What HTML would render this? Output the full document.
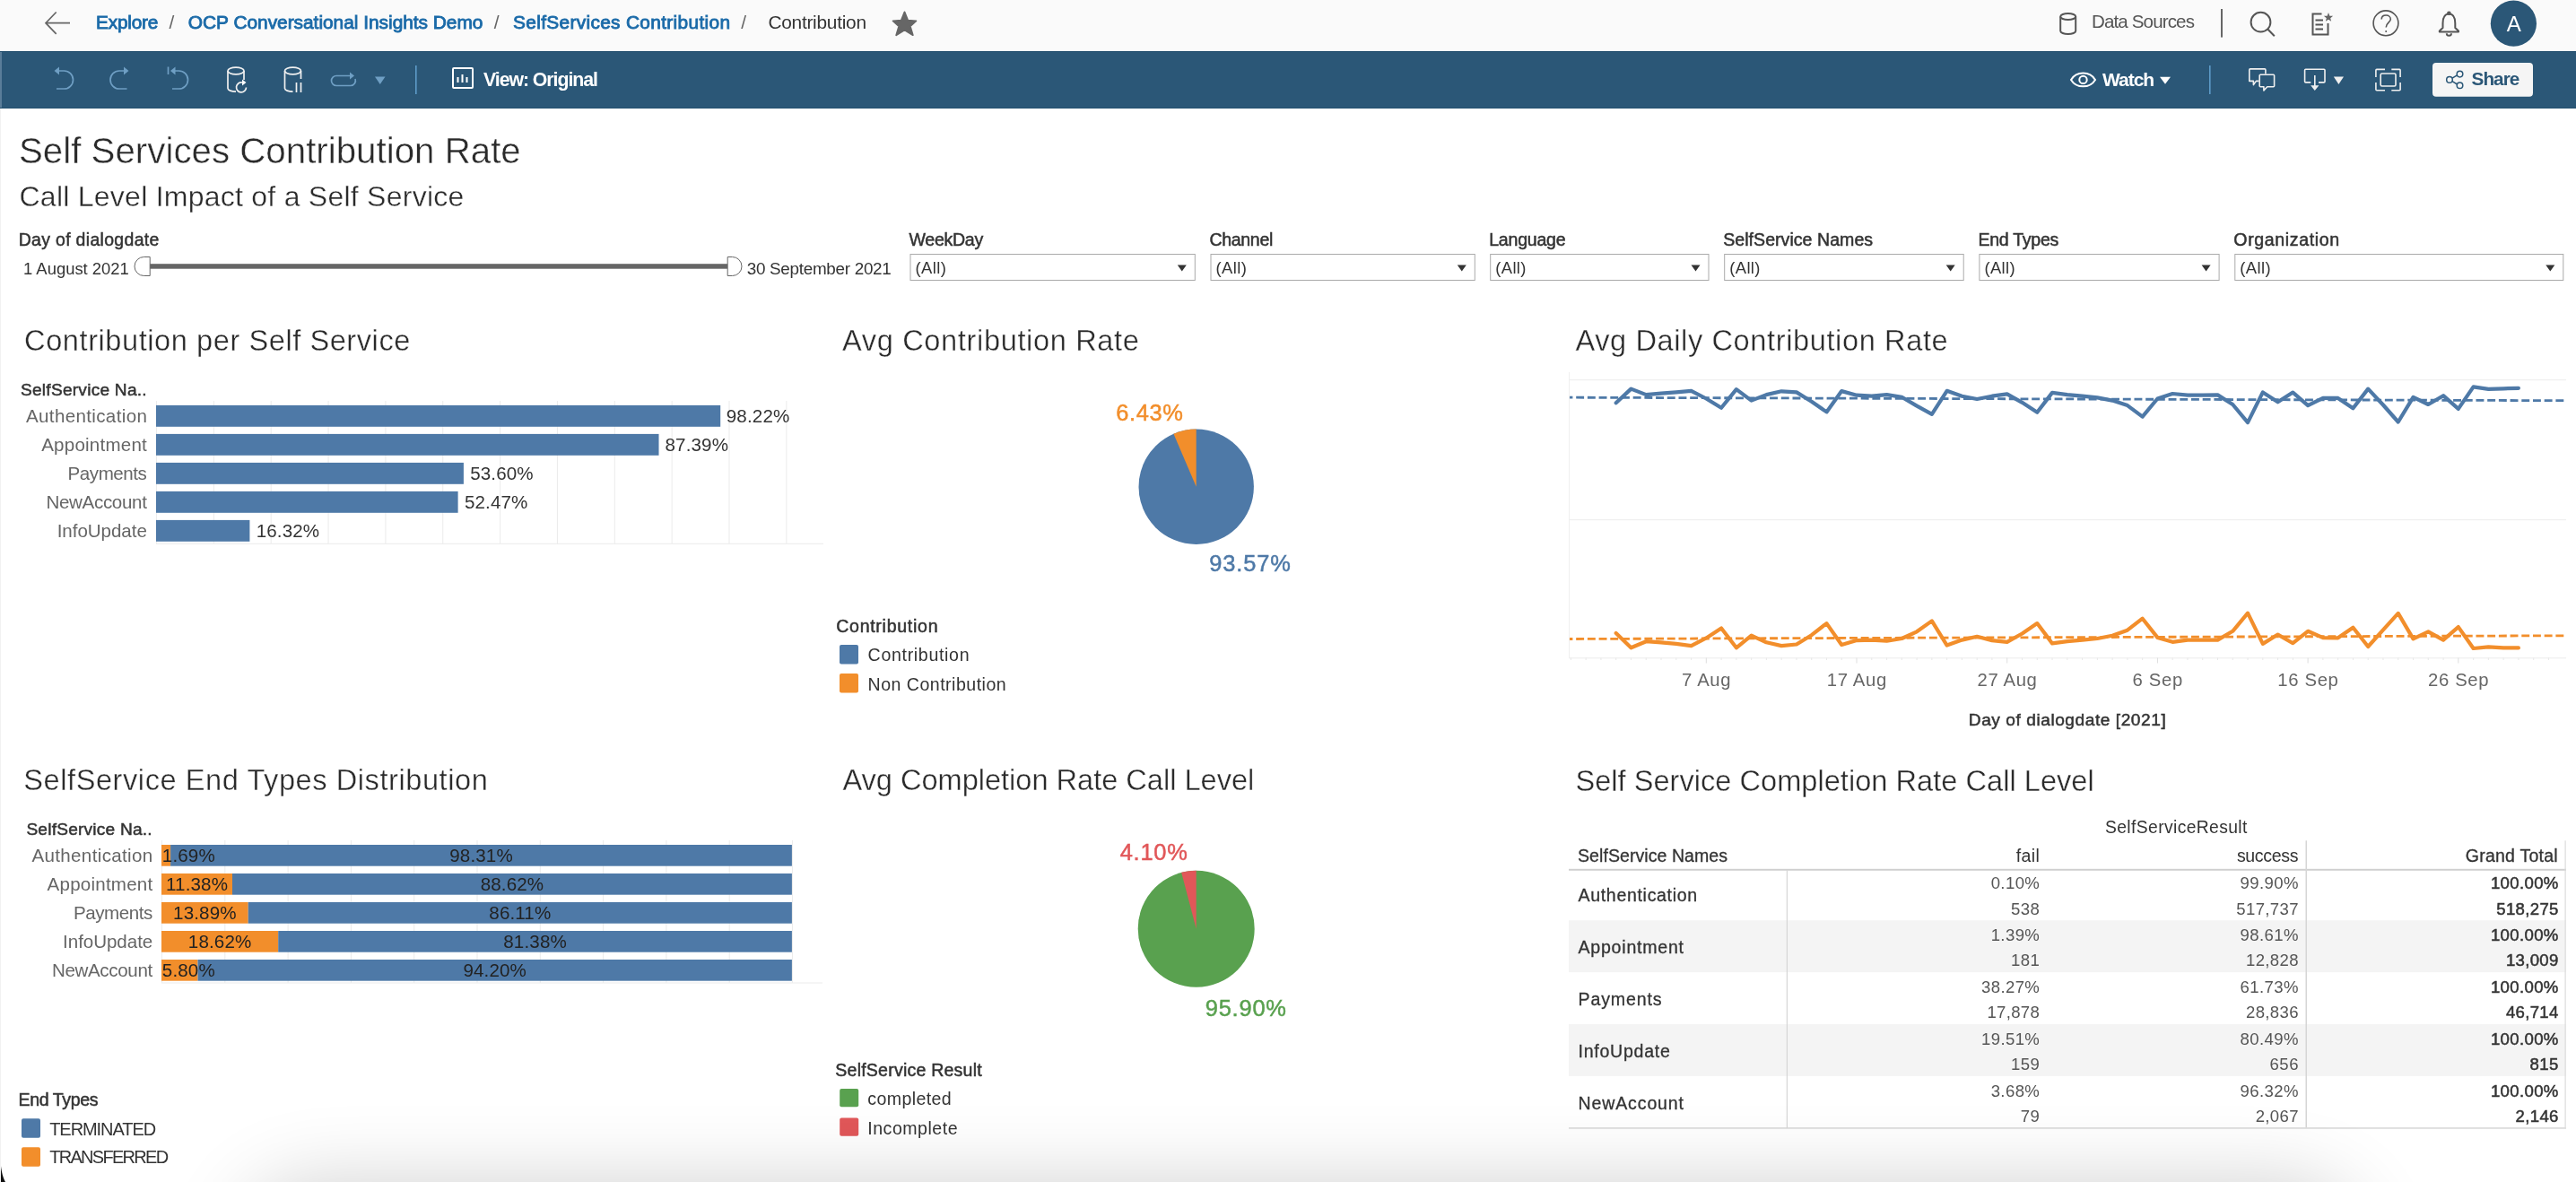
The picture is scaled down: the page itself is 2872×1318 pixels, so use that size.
<!DOCTYPE html><html><head><meta charset="utf-8"><style>
html,body{margin:0;padding:0;}
body{width:2872px;height:1318px;overflow:hidden;position:relative;background:#fff;font-family:"Liberation Sans",sans-serif;}
.t{position:absolute;white-space:nowrap;line-height:1;}
.a{position:absolute;}
svg{position:absolute;overflow:visible;}
</style></head><body><div style="position:absolute;left:0;top:0;width:2872px;height:1318px;overflow:hidden;will-change:transform;">
<div class="a" style="left:0;top:0;width:2872px;height:57px;background:#fafafa;"></div>
<svg style="left:0;top:0" width="2872" height="57"><g fill="none" stroke="#666" stroke-width="1.7"><path d="M78 25.7H51M62.7 13.5L51 25.7L62.7 37.8"/></g></svg>
<div class="t" style="left:107.10px;top:15.04px;font-size:20.86px;letter-spacing:-0.238px;font-weight:400;color:#1a6aa8;-webkit-text-stroke:0.85px #1a6aa8;">Explore</div>
<div class="t" style="left:188.40px;top:15.04px;font-size:20.86px;letter-spacing:0.000px;font-weight:400;color:#666;">/</div>
<div class="t" style="left:209.80px;top:15.04px;font-size:20.86px;letter-spacing:-0.008px;font-weight:400;color:#1a6aa8;-webkit-text-stroke:0.85px #1a6aa8;">OCP Conversational Insights Demo</div>
<div class="t" style="left:550.70px;top:15.04px;font-size:20.86px;letter-spacing:0.000px;font-weight:400;color:#666;">/</div>
<div class="t" style="left:572.00px;top:15.04px;font-size:20.86px;letter-spacing:0.326px;font-weight:400;color:#1a6aa8;-webkit-text-stroke:0.85px #1a6aa8;">SelfServices Contribution</div>
<div class="t" style="left:826.30px;top:15.04px;font-size:20.86px;letter-spacing:0.000px;font-weight:400;color:#666;">/</div>
<div class="t" style="left:856.40px;top:15.04px;font-size:20.86px;letter-spacing:-0.260px;font-weight:400;color:#333;">Contribution</div>
<svg style="left:0;top:0" width="1100" height="57"><polygon points="1008.5,13.4 1012.2,22.6 1021.4,23.3 1014.8,29.3 1017.8,39.2 1008.5,33.4 999.2,39.2 1002.2,29.3 995.6,23.3 1004.8,22.6" fill="#666" stroke="#666" stroke-width="1.8" stroke-linejoin="round"/></svg>
<svg style="left:0;top:0" width="2872" height="57"><g fill="none" stroke="#555" stroke-width="2"><ellipse cx="2305.7" cy="18.5" rx="8.5" ry="3.6"/><path d="M2297.2 18.5V34.5A8.5 3.6 0 0 0 2314.2 34.5V18.5"/></g><rect x="2476" y="10" width="2" height="31.6" fill="#666"/><g fill="none" stroke="#555" stroke-width="2"><circle cx="2520.5" cy="24.7" r="10.9"/><path d="M2528.3 32.5L2535.8 40.3"/><path d="M2588.5 15.5H2578.5V38.5H2595.5V26"/><path d="M2581.5 22.5H2590M2581.5 27.5H2590M2581.5 32.5H2590"/></g><polygon points="2596.00,14.10 2597.35,17.64 2601.14,17.83 2598.19,20.21 2599.17,23.87 2596.00,21.80 2592.83,23.87 2593.81,20.21 2590.86,17.83 2594.65,17.64" fill="#666"/><g fill="none" stroke="#555" stroke-width="1.6"><circle cx="2660" cy="25.8" r="13.9"/><path d="M2655.2 21.5C2655.2 18.2 2657.5 17 2660.2 17C2663 17 2665.3 18.8 2665.3 21.5C2665.3 24.6 2660.2 25.5 2660.2 30.5"/></g><circle cx="2660.2" cy="35" r="1" fill="#555"/><g fill="none" stroke="#555" stroke-width="2" stroke-linejoin="round"><path d="M2730.4 15.5C2725.5 15.5 2723.5 20 2723.5 26V31L2719.8 34.5V35.5H2741V34.5L2737.3 31V26C2737.3 20 2735.3 15.5 2730.4 15.5Z"/><path d="M2727.8 37.2A2.6 2.6 0 0 0 2733 37.2"/><circle cx="2730.4" cy="14.8" r="1.3"/></g><circle cx="2802.4" cy="26.2" r="25.6" fill="#2b5777"/></svg>
<div class="t" style="left:2332.00px;top:14.39px;font-size:20.57px;letter-spacing:-0.877px;font-weight:400;color:#555;">Data Sources</div>
<div class="t" style="left:2794.65px;top:15.26px;font-size:24.14px;letter-spacing:0.000px;font-weight:400;color:#fff;">A</div>
<div class="a" style="left:0;top:57px;width:2872px;height:64px;background:#2b5777;"></div>
<div class="a" style="left:0;top:57px;width:2px;height:64px;background:#5a7d99;"></div>
<div class="a" style="left:0;top:57px;width:2872px;height:1px;background:#24506f;"></div>
<div class="a" style="left:0;top:120px;width:2872px;height:1px;background:#24506f;"></div>
<svg style="left:0;top:57px" width="2872" height="64"><g fill="none" stroke-width="1.7" stroke-linecap="butt"><g stroke="#6f9fc4"><path d="M63.5 22H71.5A10 10 0 0 1 71.5 42H63"/></g><polygon points="60.5,22 66,17.5 66,26.5" fill="#6f9fc4"/><g stroke="#6f9fc4"><path d="M141 22H133A10 10 0 0 0 133 42H141.5"/></g><polygon points="143.5,22 138,17.5 138,26.5" fill="#6f9fc4"/><g stroke="#6f9fc4"><path d="M193.5 22H199.5A10 10 0 0 1 199.5 42H192"/><path d="M187.5 17.5V26"/></g><polygon points="190,22 195.5,17.5 195.5,26.5" fill="#6f9fc4"/><g stroke="#f0f0f0"><ellipse cx="263" cy="22" rx="9" ry="3.8"/><path d="M254 22V41.5A9 3.8 0 0 0 263 45.2"/><path d="M272 22V32"/><path d="M274.5 40.5A5.5 5.5 0 1 1 270 35"/></g><polygon points="270,31.5 274.5,35 270,38.5" fill="#fff"/><g stroke="#f0f0f0"><ellipse cx="326.5" cy="22" rx="9" ry="3.8"/><path d="M317.5 22V41.5A9 3.8 0 0 0 326.5 45.2"/><path d="M335.5 22V31"/><path d="M330.5 35V46M335.5 35V46"/></g><g stroke="#6f9fc4"><path d="M392 27.5H375A5.5 5.5 0 0 0 375 38.5H391A5.5 5.5 0 0 0 396 31"/></g><polygon points="390,23.5 395,27.5 390,31.5" fill="#6f9fc4"/><polygon points="418,28.5 429.5,28.5 423.75,37" fill="#6f9fc4" stroke="none"/></g><rect x="463" y="16" width="1.6" height="32" fill="#5d9bc8"/><g fill="none" stroke="#fff" stroke-width="2"><rect x="505" y="19" width="22" height="22" rx="1"/><path d="M510.5 35V29M515.5 35V26M520.5 35V29"/></g></svg>
<div class="t" style="left:539.00px;top:78.68px;font-size:21.29px;letter-spacing:-1.042px;font-weight:700;color:#fff;">View: Original</div>
<svg style="left:0;top:57px" width="2872" height="64"><g fill="none" stroke="#fff" stroke-width="2"><path d="M2309 31.9C2315 22 2330 22 2336 31.9C2330 41.8 2315 41.8 2309 31.9Z"/><circle cx="2322.5" cy="31.9" r="4.2"/></g><polygon points="2408,28.7 2420,28.7 2414,36.8" fill="#fff"/><rect x="2463" y="16" width="1.6" height="32" fill="#5d9bc8"/><g fill="none" stroke="#f0f0f0" stroke-width="1.6" stroke-linejoin="round"><path d="M2518.5 33.4H2515.4L2512.4 37.6V33.4H2507.8V20.9Q2507.8 19.9 2508.8 19.9H2524.9Q2525.9 19.9 2525.9 20.9V25.5"/><path d="M2520.2 26.2H2534.6Q2535.6 26.2 2535.6 27.2V38.7Q2535.6 39.7 2534.6 39.7H2527.8L2523.9 43.9V39.7H2520.2Q2519.2 39.7 2519.2 38.7V27.2Q2519.2 26.2 2520.2 26.2Z"/><path d="M2576.3 34.9H2570.6Q2569.6 34.9 2569.6 33.9V21.2Q2569.6 20.2 2570.6 20.2H2591Q2592 20.2 2592 21.2V33.9Q2592 34.9 2591 34.9H2585"/><path d="M2580.8 27V39"/></g><polygon points="2576.2,38.2 2585.4,38.2 2580.8,44" fill="#f0f0f0"/><polygon points="2601.8,28.4 2613,28.4 2607.4,36.9" fill="#f0f0f0"/><g fill="none" stroke="#f0f0f0" stroke-width="1.6"><path d="M2648.9 29V21.4Q2648.9 20.4 2649.9 20.4H2659M2666.3 20.4H2675.1Q2676.1 20.4 2676.1 21.4V29M2676.1 35V42.7Q2676.1 43.7 2675.1 43.7H2666.3M2659 43.7H2649.9Q2648.9 43.7 2648.9 42.7V35"/><rect x="2654.2" y="25" width="16.8" height="14" rx="1.5"/></g><rect x="2712" y="12.9" width="112" height="37.9" rx="4" fill="#f5f5f5"/><g fill="none" stroke="#2b5777" stroke-width="1.5"><circle cx="2731" cy="31.9" r="3.3"/><circle cx="2742.5" cy="25.6" r="3.3"/><circle cx="2742.5" cy="38.2" r="3.3"/><path d="M2734 30.2L2739.5 26.8M2734 33.6L2739.5 37"/></g></svg>
<div class="t" style="left:2344.00px;top:78.22px;font-size:21.00px;letter-spacing:-1.006px;font-weight:700;color:#fff;">Watch</div>
<div class="t" style="left:2755.60px;top:78.17px;font-size:20.71px;letter-spacing:-0.966px;font-weight:700;color:#2b5777;">Share</div>
<div class="t" style="left:21.00px;top:148.90px;font-size:40.29px;letter-spacing:-0.000px;font-weight:400;color:#2a2a2a;-webkit-text-stroke:0.44px #fff;">Self Services Contribution Rate</div>
<div class="t" style="left:21.50px;top:202.81px;font-size:32.00px;letter-spacing:0.249px;font-weight:400;color:#2a2a2a;-webkit-text-stroke:0.35px #fff;">Call Level Impact of a Self Service</div>
<div class="t" style="left:20.70px;top:257.95px;font-size:19.43px;letter-spacing:0.343px;font-weight:400;color:#333;-webkit-text-stroke:0.5px #333;">Day of dialogdate</div>
<div class="t" style="left:26.00px;top:291.10px;font-size:18.43px;letter-spacing:0.004px;font-weight:400;color:#333;">1 August 2021</div>
<div class="t" style="left:832.70px;top:290.84px;font-size:18.86px;letter-spacing:-0.284px;font-weight:400;color:#333;">30 September 2021</div>
<svg style="left:0;top:0" width="1000" height="330"><rect x="167" y="294.2" width="644" height="5.5" fill="#666"/><path d="M167.2 286.5V307.5H160.5A10.5 10.5 0 0 1 160.5 286.5Z" fill="#fff" stroke="#666" stroke-width="1"/><path d="M811.2 286.5V307.5H816.5A10.5 10.5 0 0 0 816.5 286.5Z" fill="#fff" stroke="#666" stroke-width="1"/></svg>
<svg style="left:0;top:0" width="2872" height="330">
<rect x="1015.0" y="283.5" width="317.3" height="29" fill="#fff" stroke="#aaa" stroke-width="1"/>
<polygon points="1312.8,295.4 1322.8,295.4 1317.8,302.4" fill="#333"/>
<rect x="1350.0" y="283.5" width="294.3" height="29" fill="#fff" stroke="#aaa" stroke-width="1"/>
<polygon points="1624.8,295.4 1634.8,295.4 1629.8,302.4" fill="#333"/>
<rect x="1661.7" y="283.5" width="243.3" height="29" fill="#fff" stroke="#aaa" stroke-width="1"/>
<polygon points="1885.5,295.4 1895.5,295.4 1890.5,302.4" fill="#333"/>
<rect x="1922.7" y="283.5" width="266.5" height="29" fill="#fff" stroke="#aaa" stroke-width="1"/>
<polygon points="2169.7,295.4 2179.7,295.4 2174.7,302.4" fill="#333"/>
<rect x="2206.9" y="283.5" width="267.2" height="29" fill="#fff" stroke="#aaa" stroke-width="1"/>
<polygon points="2454.6,295.4 2464.6,295.4 2459.6,302.4" fill="#333"/>
<rect x="2491.8" y="283.5" width="366.0" height="29" fill="#fff" stroke="#aaa" stroke-width="1"/>
<polygon points="2838.3,295.4 2848.3,295.4 2843.3,302.4" fill="#333"/>
</svg>
<div class="t" style="left:1013.50px;top:258.23px;font-size:19.57px;letter-spacing:-0.295px;font-weight:400;color:#333;-webkit-text-stroke:0.5px #333;">WeekDay</div>
<div class="t" style="left:1020.50px;top:289.90px;font-size:18.43px;letter-spacing:0.388px;font-weight:400;color:#333;">(All)</div>
<div class="t" style="left:1348.50px;top:258.23px;font-size:19.57px;letter-spacing:-0.351px;font-weight:400;color:#333;-webkit-text-stroke:0.5px #333;">Channel</div>
<div class="t" style="left:1355.50px;top:289.90px;font-size:18.43px;letter-spacing:0.388px;font-weight:400;color:#333;">(All)</div>
<div class="t" style="left:1660.20px;top:258.23px;font-size:19.57px;letter-spacing:-0.225px;font-weight:400;color:#333;-webkit-text-stroke:0.5px #333;">Language</div>
<div class="t" style="left:1667.20px;top:289.90px;font-size:18.43px;letter-spacing:0.388px;font-weight:400;color:#333;">(All)</div>
<div class="t" style="left:1921.20px;top:258.23px;font-size:19.57px;letter-spacing:0.037px;font-weight:400;color:#333;-webkit-text-stroke:0.5px #333;">SelfService Names</div>
<div class="t" style="left:1928.20px;top:289.90px;font-size:18.43px;letter-spacing:0.388px;font-weight:400;color:#333;">(All)</div>
<div class="t" style="left:2205.40px;top:258.23px;font-size:19.57px;letter-spacing:-0.265px;font-weight:400;color:#333;-webkit-text-stroke:0.5px #333;">End Types</div>
<div class="t" style="left:2212.40px;top:289.90px;font-size:18.43px;letter-spacing:0.388px;font-weight:400;color:#333;">(All)</div>
<div class="t" style="left:2490.30px;top:258.23px;font-size:19.57px;letter-spacing:0.621px;font-weight:400;color:#333;-webkit-text-stroke:0.5px #333;">Organization</div>
<div class="t" style="left:2497.30px;top:289.90px;font-size:18.43px;letter-spacing:0.388px;font-weight:400;color:#333;">(All)</div>
<div class="t" style="left:27.10px;top:363.73px;font-size:32.57px;letter-spacing:0.564px;font-weight:400;color:#2a2a2a;-webkit-text-stroke:0.36px #fff;">Contribution per Self Service</div>
<div class="t" style="left:23.00px;top:425.10px;font-size:19.14px;letter-spacing:0.234px;font-weight:400;color:#333;-webkit-text-stroke:0.5px #333;">SelfService Na..</div>
<svg style="left:0;top:0" width="2872" height="1318">
<rect x="174.00" y="447" width="1" height="159.5" fill="#ececec"/>
<rect x="237.85" y="447" width="1" height="159.5" fill="#ececec"/>
<rect x="301.70" y="447" width="1" height="159.5" fill="#ececec"/>
<rect x="365.55" y="447" width="1" height="159.5" fill="#ececec"/>
<rect x="429.40" y="447" width="1" height="159.5" fill="#ececec"/>
<rect x="493.25" y="447" width="1" height="159.5" fill="#ececec"/>
<rect x="557.10" y="447" width="1" height="159.5" fill="#ececec"/>
<rect x="620.95" y="447" width="1" height="159.5" fill="#ececec"/>
<rect x="684.80" y="447" width="1" height="159.5" fill="#ececec"/>
<rect x="748.65" y="447" width="1" height="159.5" fill="#ececec"/>
<rect x="812.50" y="447" width="1" height="159.5" fill="#ececec"/>
<rect x="876.35" y="447" width="1" height="159.5" fill="#ececec"/>
<rect x="174" y="605.8" width="744" height="1" fill="#ececec"/>
<rect x="174" y="451.9" width="629.2" height="23.9" fill="#4e79a7"/>
<rect x="174" y="483.9" width="560.5" height="23.9" fill="#4e79a7"/>
<rect x="174" y="515.9" width="342.9" height="23.9" fill="#4e79a7"/>
<rect x="174" y="547.9" width="336.6" height="23.9" fill="#4e79a7"/>
<rect x="174" y="579.9" width="104.4" height="23.9" fill="#4e79a7"/>
</svg>
<div class="t" style="left:29.00px;top:454.49px;font-size:20.57px;letter-spacing:0.348px;font-weight:400;color:#666;">Authentication</div>
<div class="t" style="left:809.80px;top:454.49px;font-size:20.57px;letter-spacing:0.140px;font-weight:400;color:#333;">98.22%</div>
<div class="t" style="left:46.20px;top:486.49px;font-size:20.57px;letter-spacing:0.219px;font-weight:400;color:#666;">Appointment</div>
<div class="t" style="left:741.50px;top:486.49px;font-size:20.57px;letter-spacing:0.140px;font-weight:400;color:#333;">87.39%</div>
<div class="t" style="left:75.60px;top:518.49px;font-size:20.57px;letter-spacing:-0.452px;font-weight:400;color:#666;">Payments</div>
<div class="t" style="left:524.20px;top:518.49px;font-size:20.57px;letter-spacing:0.140px;font-weight:400;color:#333;">53.60%</div>
<div class="t" style="left:51.50px;top:550.49px;font-size:20.57px;letter-spacing:-0.343px;font-weight:400;color:#666;">NewAccount</div>
<div class="t" style="left:517.90px;top:550.49px;font-size:20.57px;letter-spacing:0.140px;font-weight:400;color:#333;">52.47%</div>
<div class="t" style="left:63.70px;top:582.49px;font-size:20.57px;letter-spacing:-0.051px;font-weight:400;color:#666;">InfoUpdate</div>
<div class="t" style="left:285.70px;top:582.49px;font-size:20.57px;letter-spacing:0.140px;font-weight:400;color:#333;">16.32%</div>
<div class="t" style="left:939.00px;top:363.73px;font-size:32.57px;letter-spacing:0.647px;font-weight:400;color:#2a2a2a;-webkit-text-stroke:0.36px #fff;">Avg Contribution Rate</div>
<svg style="left:0;top:0" width="2872" height="1318"><circle cx="1333.7" cy="542.8" r="64.2" fill="#4e79a7"/><path d="M1333.7 542.8L1333.7 478.59999999999997A64.2 64.2 0 0 0 1308.46 483.77Z" fill="#f28e2b"/><circle cx="1333.7" cy="1035.7" r="65" fill="#59a14f"/><path d="M1333.7 1035.7L1333.7 970.7A65 65 0 0 0 1317.14 972.84Z" fill="#e15759"/><rect x="936" y="719" width="21" height="21.6" rx="2" fill="#4e79a7"/><rect x="936" y="751" width="21" height="21.6" rx="2" fill="#f28e2b"/><rect x="936.2" y="1214" width="21" height="20.3" rx="2" fill="#59a14f"/><rect x="936.2" y="1246.4" width="21" height="20.3" rx="2" fill="#e15759"/><rect x="24" y="1247.3" width="21" height="21.4" rx="2" fill="#4e79a7"/><rect x="24" y="1279.3" width="21" height="21.4" rx="2" fill="#f28e2b"/></svg>
<div class="t" style="left:1244.20px;top:447.87px;font-size:25.43px;letter-spacing:0.652px;font-weight:400;color:#f28e2b;-webkit-text-stroke:0.5px #f28e2b;">6.43%</div>
<div class="t" style="left:1348.20px;top:615.97px;font-size:25.43px;letter-spacing:0.869px;font-weight:400;color:#4e79a7;-webkit-text-stroke:0.5px #4e79a7;">93.57%</div>
<div class="t" style="left:932.20px;top:689.23px;font-size:19.57px;letter-spacing:0.716px;font-weight:400;color:#333;-webkit-text-stroke:0.5px #333;">Contribution</div>
<div class="t" style="left:967.60px;top:721.03px;font-size:19.57px;letter-spacing:0.679px;font-weight:400;color:#333;">Contribution</div>
<div class="t" style="left:967.60px;top:753.53px;font-size:19.57px;letter-spacing:0.482px;font-weight:400;color:#333;">Non Contribution</div>
<div class="t" style="left:1756.40px;top:363.73px;font-size:32.57px;letter-spacing:0.611px;font-weight:400;color:#2a2a2a;-webkit-text-stroke:0.36px #fff;">Avg Daily Contribution Rate</div>
<svg style="left:0;top:0" width="2872" height="1318">
<rect x="1749" y="423" width="1112" height="1.2" fill="#efefef"/>
<rect x="1749" y="579" width="1112" height="1.2" fill="#efefef"/>
<rect x="1749" y="733.3" width="1112" height="1" fill="#ebebeb"/>
<rect x="1749" y="415" width="1" height="319" fill="#efefef"/>
<rect x="1750.89" y="733.5" width="1" height="2.5" fill="#e8e8e8"/>
<rect x="1767.66" y="733.5" width="1" height="2.5" fill="#e8e8e8"/>
<rect x="1784.43" y="733.5" width="1" height="2.5" fill="#e8e8e8"/>
<rect x="1801.20" y="733.5" width="1" height="2.5" fill="#e8e8e8"/>
<rect x="1817.97" y="733.5" width="1" height="2.5" fill="#e8e8e8"/>
<rect x="1834.74" y="733.5" width="1" height="2.5" fill="#e8e8e8"/>
<rect x="1851.51" y="733.5" width="1" height="2.5" fill="#e8e8e8"/>
<rect x="1868.28" y="733.5" width="1" height="2.5" fill="#e8e8e8"/>
<rect x="1885.05" y="733.5" width="1" height="2.5" fill="#e8e8e8"/>
<rect x="1901.82" y="733.5" width="1" height="6" fill="#dedede"/>
<rect x="1918.59" y="733.5" width="1" height="2.5" fill="#e8e8e8"/>
<rect x="1935.36" y="733.5" width="1" height="2.5" fill="#e8e8e8"/>
<rect x="1952.13" y="733.5" width="1" height="2.5" fill="#e8e8e8"/>
<rect x="1968.90" y="733.5" width="1" height="2.5" fill="#e8e8e8"/>
<rect x="1985.67" y="733.5" width="1" height="2.5" fill="#e8e8e8"/>
<rect x="2002.44" y="733.5" width="1" height="2.5" fill="#e8e8e8"/>
<rect x="2019.21" y="733.5" width="1" height="2.5" fill="#e8e8e8"/>
<rect x="2035.98" y="733.5" width="1" height="2.5" fill="#e8e8e8"/>
<rect x="2052.75" y="733.5" width="1" height="2.5" fill="#e8e8e8"/>
<rect x="2069.52" y="733.5" width="1" height="6" fill="#dedede"/>
<rect x="2086.29" y="733.5" width="1" height="2.5" fill="#e8e8e8"/>
<rect x="2103.06" y="733.5" width="1" height="2.5" fill="#e8e8e8"/>
<rect x="2119.83" y="733.5" width="1" height="2.5" fill="#e8e8e8"/>
<rect x="2136.60" y="733.5" width="1" height="2.5" fill="#e8e8e8"/>
<rect x="2153.37" y="733.5" width="1" height="2.5" fill="#e8e8e8"/>
<rect x="2170.14" y="733.5" width="1" height="2.5" fill="#e8e8e8"/>
<rect x="2186.91" y="733.5" width="1" height="2.5" fill="#e8e8e8"/>
<rect x="2203.68" y="733.5" width="1" height="2.5" fill="#e8e8e8"/>
<rect x="2220.45" y="733.5" width="1" height="2.5" fill="#e8e8e8"/>
<rect x="2237.22" y="733.5" width="1" height="6" fill="#dedede"/>
<rect x="2253.99" y="733.5" width="1" height="2.5" fill="#e8e8e8"/>
<rect x="2270.76" y="733.5" width="1" height="2.5" fill="#e8e8e8"/>
<rect x="2287.53" y="733.5" width="1" height="2.5" fill="#e8e8e8"/>
<rect x="2304.30" y="733.5" width="1" height="2.5" fill="#e8e8e8"/>
<rect x="2321.07" y="733.5" width="1" height="2.5" fill="#e8e8e8"/>
<rect x="2337.84" y="733.5" width="1" height="2.5" fill="#e8e8e8"/>
<rect x="2354.61" y="733.5" width="1" height="2.5" fill="#e8e8e8"/>
<rect x="2371.38" y="733.5" width="1" height="2.5" fill="#e8e8e8"/>
<rect x="2388.15" y="733.5" width="1" height="2.5" fill="#e8e8e8"/>
<rect x="2404.92" y="733.5" width="1" height="6" fill="#dedede"/>
<rect x="2421.69" y="733.5" width="1" height="2.5" fill="#e8e8e8"/>
<rect x="2438.46" y="733.5" width="1" height="2.5" fill="#e8e8e8"/>
<rect x="2455.23" y="733.5" width="1" height="2.5" fill="#e8e8e8"/>
<rect x="2472.00" y="733.5" width="1" height="2.5" fill="#e8e8e8"/>
<rect x="2488.77" y="733.5" width="1" height="2.5" fill="#e8e8e8"/>
<rect x="2505.54" y="733.5" width="1" height="2.5" fill="#e8e8e8"/>
<rect x="2522.31" y="733.5" width="1" height="2.5" fill="#e8e8e8"/>
<rect x="2539.08" y="733.5" width="1" height="2.5" fill="#e8e8e8"/>
<rect x="2555.85" y="733.5" width="1" height="2.5" fill="#e8e8e8"/>
<rect x="2572.62" y="733.5" width="1" height="6" fill="#dedede"/>
<rect x="2589.39" y="733.5" width="1" height="2.5" fill="#e8e8e8"/>
<rect x="2606.16" y="733.5" width="1" height="2.5" fill="#e8e8e8"/>
<rect x="2622.93" y="733.5" width="1" height="2.5" fill="#e8e8e8"/>
<rect x="2639.70" y="733.5" width="1" height="2.5" fill="#e8e8e8"/>
<rect x="2656.47" y="733.5" width="1" height="2.5" fill="#e8e8e8"/>
<rect x="2673.24" y="733.5" width="1" height="2.5" fill="#e8e8e8"/>
<rect x="2690.01" y="733.5" width="1" height="2.5" fill="#e8e8e8"/>
<rect x="2706.78" y="733.5" width="1" height="2.5" fill="#e8e8e8"/>
<rect x="2723.55" y="733.5" width="1" height="2.5" fill="#e8e8e8"/>
<rect x="2740.32" y="733.5" width="1" height="6" fill="#dedede"/>
<rect x="2757.09" y="733.5" width="1" height="2.5" fill="#e8e8e8"/>
<rect x="2773.86" y="733.5" width="1" height="2.5" fill="#e8e8e8"/>
<rect x="2790.63" y="733.5" width="1" height="2.5" fill="#e8e8e8"/>
<rect x="2807.40" y="733.5" width="1" height="2.5" fill="#e8e8e8"/>
<rect x="2824.17" y="733.5" width="1" height="2.5" fill="#e8e8e8"/>
<rect x="2840.94" y="733.5" width="1" height="2.5" fill="#e8e8e8"/>
<line x1="1750" y1="443.2" x2="2859" y2="446.7" stroke="#4e79a7" stroke-width="2.8" stroke-dasharray="8.9 3.8" stroke-dashoffset="5.5"/>
<line x1="1750" y1="712.5" x2="2859" y2="708.8" stroke="#f28e2b" stroke-width="2.8" stroke-dasharray="8.9 3.8" stroke-dashoffset="5.5"/>
<polyline points="1801.70,449.30 1818.47,433.60 1835.24,440.10 1852.01,438.70 1868.78,437.40 1885.55,435.80 1902.32,444.50 1919.09,454.80 1935.86,434.10 1952.63,446.60 1969.40,440.10 1986.17,436.30 2002.94,437.40 2019.71,447.70 2036.48,459.40 2053.25,436.10 2070.02,440.70 2086.79,441.70 2103.56,440.10 2120.33,442.80 2137.10,452.60 2153.87,461.80 2170.64,435.80 2187.41,441.70 2204.18,445.00 2220.95,441.70 2237.72,439.30 2254.49,448.80 2271.26,459.70 2288.03,437.90 2304.80,440.10 2321.57,441.70 2338.34,443.40 2355.11,446.60 2371.88,452.10 2388.65,464.60 2405.42,444.50 2422.19,439.00 2438.96,440.70 2455.73,440.70 2472.50,440.40 2489.27,451.00 2506.04,471.10 2522.81,437.40 2539.58,448.30 2556.35,437.60 2573.12,452.10 2589.89,443.90 2606.66,443.90 2623.43,455.30 2640.20,433.60 2656.97,451.50 2673.74,470.50 2690.51,442.80 2707.28,451.00 2724.05,441.20 2740.82,455.90 2757.59,431.40 2774.36,433.90 2791.13,433.30 2807.90,432.80" fill="none" stroke="#4e79a7" stroke-width="4.2" stroke-linejoin="round" stroke-linecap="round"/>
<polyline points="1801.70,706.00 1818.47,722.30 1835.24,715.20 1852.01,716.30 1868.78,717.90 1885.55,720.10 1902.32,711.40 1919.09,700.50 1935.86,722.30 1952.63,708.70 1969.40,716.30 1986.17,720.10 2002.94,718.50 2019.71,708.20 2036.48,695.10 2053.25,719.00 2070.02,714.10 2086.79,713.60 2103.56,714.70 2120.33,712.00 2137.10,704.30 2153.87,692.40 2170.64,719.60 2187.41,713.60 2204.18,709.80 2220.95,714.10 2237.72,715.80 2254.49,706.50 2271.26,695.10 2288.03,717.40 2304.80,715.20 2321.57,713.60 2338.34,712.00 2355.11,708.70 2371.88,702.70 2388.65,689.70 2405.42,710.90 2422.19,715.80 2438.96,713.60 2455.73,713.60 2472.50,713.60 2489.27,703.80 2506.04,683.70 2522.81,717.90 2539.58,707.50 2556.35,717.20 2573.12,703.80 2589.89,711.10 2606.66,711.30 2623.43,699.80 2640.20,721.00 2656.97,702.40 2673.74,683.90 2690.51,712.40 2707.28,704.40 2724.05,713.70 2740.82,699.10 2757.59,723.00 2774.36,721.40 2791.13,722.40 2807.90,722.40" fill="none" stroke="#f28e2b" stroke-width="4.2" stroke-linejoin="round" stroke-linecap="round"/>
</svg>
<div class="t" style="left:1875.08px;top:747.53px;font-size:20.29px;letter-spacing:0.649px;font-weight:400;color:#666;">7 Aug</div>
<div class="t" style="left:2036.86px;top:747.53px;font-size:20.29px;letter-spacing:0.632px;font-weight:400;color:#666;">17 Aug</div>
<div class="t" style="left:2204.56px;top:747.53px;font-size:20.29px;letter-spacing:0.632px;font-weight:400;color:#666;">27 Aug</div>
<div class="t" style="left:2377.59px;top:747.53px;font-size:20.29px;letter-spacing:0.663px;font-weight:400;color:#666;">6 Sep</div>
<div class="t" style="left:2539.37px;top:747.53px;font-size:20.29px;letter-spacing:0.643px;font-weight:400;color:#666;">16 Sep</div>
<div class="t" style="left:2707.07px;top:747.53px;font-size:20.29px;letter-spacing:0.643px;font-weight:400;color:#666;">26 Sep</div>
<div class="t" style="left:2194.80px;top:793.10px;font-size:19.14px;letter-spacing:0.547px;font-weight:400;color:#333;-webkit-text-stroke:0.5px #333;">Day of dialogdate [2021]</div>
<div class="t" style="left:26.30px;top:854.03px;font-size:32.57px;letter-spacing:0.562px;font-weight:400;color:#2a2a2a;-webkit-text-stroke:0.36px #fff;">SelfService End Types Distribution</div>
<div class="t" style="left:29.40px;top:915.40px;font-size:19.14px;letter-spacing:0.211px;font-weight:400;color:#333;-webkit-text-stroke:0.5px #333;">SelfService Na..</div>
<svg style="left:0;top:0" width="2872" height="1318">
<rect x="180.00" y="937" width="1" height="159" fill="#ececec"/>
<rect x="250.30" y="937" width="1" height="159" fill="#ececec"/>
<rect x="320.60" y="937" width="1" height="159" fill="#ececec"/>
<rect x="390.90" y="937" width="1" height="159" fill="#ececec"/>
<rect x="461.20" y="937" width="1" height="159" fill="#ececec"/>
<rect x="531.50" y="937" width="1" height="159" fill="#ececec"/>
<rect x="601.80" y="937" width="1" height="159" fill="#ececec"/>
<rect x="672.10" y="937" width="1" height="159" fill="#ececec"/>
<rect x="742.40" y="937" width="1" height="159" fill="#ececec"/>
<rect x="812.70" y="937" width="1" height="159" fill="#ececec"/>
<rect x="883.00" y="937" width="1" height="159" fill="#ececec"/>
<rect x="180" y="1095.5" width="737" height="1" fill="#ececec"/>
<rect x="180" y="942.0" width="10.1" height="23.7" fill="#f28e2b"/>
<rect x="190.1" y="942.0" width="692.8" height="23.7" fill="#4e79a7"/>
<rect x="180" y="974.0" width="79.0" height="23.7" fill="#f28e2b"/>
<rect x="259.0" y="974.0" width="623.9" height="23.7" fill="#4e79a7"/>
<rect x="180" y="1006.0" width="96.7" height="23.7" fill="#f28e2b"/>
<rect x="276.7" y="1006.0" width="606.2" height="23.7" fill="#4e79a7"/>
<rect x="180" y="1038.0" width="130.2" height="23.7" fill="#f28e2b"/>
<rect x="310.2" y="1038.0" width="572.7" height="23.7" fill="#4e79a7"/>
<rect x="180" y="1070.0" width="40.5" height="23.7" fill="#f28e2b"/>
<rect x="220.5" y="1070.0" width="662.4" height="23.7" fill="#4e79a7"/>
</svg>
<div class="t" style="left:35.40px;top:944.49px;font-size:20.57px;letter-spacing:0.348px;font-weight:400;color:#666;">Authentication</div>
<div class="t" style="left:180.80px;top:944.49px;font-size:20.57px;letter-spacing:0.146px;font-weight:400;color:#222;">1.69%</div>
<div class="t" style="left:501.26px;top:944.49px;font-size:20.57px;letter-spacing:0.140px;font-weight:400;color:#222;">98.31%</div>
<div class="t" style="left:52.60px;top:976.49px;font-size:20.57px;letter-spacing:0.219px;font-weight:400;color:#666;">Appointment</div>
<div class="t" style="left:185.04px;top:976.49px;font-size:20.57px;letter-spacing:0.136px;font-weight:400;color:#222;">11.38%</div>
<div class="t" style="left:535.71px;top:976.49px;font-size:20.57px;letter-spacing:0.140px;font-weight:400;color:#222;">88.62%</div>
<div class="t" style="left:82.00px;top:1008.49px;font-size:20.57px;letter-spacing:-0.452px;font-weight:400;color:#666;">Payments</div>
<div class="t" style="left:193.11px;top:1008.49px;font-size:20.57px;letter-spacing:0.140px;font-weight:400;color:#222;">13.89%</div>
<div class="t" style="left:545.34px;top:1008.49px;font-size:20.57px;letter-spacing:0.136px;font-weight:400;color:#222;">86.11%</div>
<div class="t" style="left:70.10px;top:1040.49px;font-size:20.57px;letter-spacing:-0.051px;font-weight:400;color:#666;">InfoUpdate</div>
<div class="t" style="left:209.86px;top:1040.49px;font-size:20.57px;letter-spacing:0.140px;font-weight:400;color:#222;">18.62%</div>
<div class="t" style="left:561.31px;top:1040.49px;font-size:20.57px;letter-spacing:0.140px;font-weight:400;color:#222;">81.38%</div>
<div class="t" style="left:57.90px;top:1072.49px;font-size:20.57px;letter-spacing:-0.343px;font-weight:400;color:#666;">NewAccount</div>
<div class="t" style="left:180.80px;top:1072.49px;font-size:20.57px;letter-spacing:0.146px;font-weight:400;color:#222;">5.80%</div>
<div class="t" style="left:516.46px;top:1072.49px;font-size:20.57px;letter-spacing:0.140px;font-weight:400;color:#222;">94.20%</div>
<div class="t" style="left:20.50px;top:1217.33px;font-size:19.57px;letter-spacing:-0.390px;font-weight:400;color:#333;-webkit-text-stroke:0.5px #333;">End Types</div>
<div class="t" style="left:55.20px;top:1248.87px;font-size:20.00px;letter-spacing:-1.058px;font-weight:400;color:#333;">TERMINATED</div>
<div class="t" style="left:55.20px;top:1280.37px;font-size:20.00px;letter-spacing:-1.702px;font-weight:400;color:#333;">TRANSFERRED</div>
<div class="t" style="left:939.40px;top:854.03px;font-size:32.57px;letter-spacing:-0.009px;font-weight:400;color:#2a2a2a;-webkit-text-stroke:0.36px #fff;">Avg Completion Rate Call Level</div>
<div class="t" style="left:1248.70px;top:937.87px;font-size:25.43px;letter-spacing:0.752px;font-weight:400;color:#e15759;-webkit-text-stroke:0.5px #e15759;">4.10%</div>
<div class="t" style="left:1343.70px;top:1111.67px;font-size:25.43px;letter-spacing:0.809px;font-weight:400;color:#59a14f;-webkit-text-stroke:0.5px #59a14f;">95.90%</div>
<div class="t" style="left:931.30px;top:1183.93px;font-size:19.57px;letter-spacing:0.206px;font-weight:400;color:#333;-webkit-text-stroke:0.5px #333;">SelfService Result</div>
<div class="t" style="left:967.30px;top:1216.23px;font-size:19.57px;letter-spacing:0.387px;font-weight:400;color:#333;">completed</div>
<div class="t" style="left:967.30px;top:1248.63px;font-size:19.57px;letter-spacing:0.506px;font-weight:400;color:#333;">Incomplete</div>
<div class="t" style="left:1756.40px;top:854.53px;font-size:32.57px;letter-spacing:0.026px;font-weight:400;color:#2a2a2a;-webkit-text-stroke:0.36px #fff;">Self Service Completion Rate Call Level</div>
<svg style="left:0;top:0" width="2872" height="1318">
<rect x="1749" y="1026.2" width="1112" height="57.9" fill="#f4f4f4"/>
<rect x="1749" y="1142.0" width="1112" height="57.9" fill="#f4f4f4"/>
<rect x="1749" y="968.8" width="1112" height="2" fill="#d0d0d0"/>
<rect x="1749" y="1257.2" width="1112" height="1.5" fill="#d6d6d6"/>
<rect x="1991.8" y="970" width="1.2" height="288" fill="#d6d6d6"/>
<rect x="2570.5" y="937.3" width="1.5" height="320" fill="#d6d6d6"/>
<rect x="2859.5" y="937.3" width="1.2" height="320" fill="#dcdcdc"/>
</svg>
<div class="t" style="left:2347.00px;top:912.87px;font-size:19.29px;letter-spacing:0.387px;font-weight:400;color:#333;">SelfServiceResult</div>
<div class="t" style="left:1759.00px;top:944.93px;font-size:19.57px;letter-spacing:0.043px;font-weight:400;color:#333;-webkit-text-stroke:0.3px #333;">SelfService Names</div>
<div class="t" style="left:2247.64px;top:944.63px;font-size:19.57px;letter-spacing:0.417px;font-weight:400;color:#333;">fail</div>
<div class="t" style="left:2493.90px;top:944.63px;font-size:19.57px;letter-spacing:-0.349px;font-weight:400;color:#333;">success</div>
<div class="t" style="left:2748.80px;top:944.93px;font-size:19.57px;letter-spacing:0.199px;font-weight:400;color:#333;-webkit-text-stroke:0.3px #333;">Grand Total</div>
<div class="t" style="left:1759.50px;top:989.33px;font-size:19.57px;letter-spacing:0.668px;font-weight:400;color:#333;-webkit-text-stroke:0.3px #333;">Authentication</div>
<div class="t" style="left:2219.67px;top:975.98px;font-size:18.57px;letter-spacing:0.395px;font-weight:400;color:#555;">0.10%</div>
<div class="t" style="left:2241.99px;top:1004.58px;font-size:18.57px;letter-spacing:0.465px;font-weight:400;color:#555;">538</div>
<div class="t" style="left:2497.62px;top:975.98px;font-size:18.57px;letter-spacing:0.378px;font-weight:400;color:#555;">99.90%</div>
<div class="t" style="left:2493.35px;top:1004.58px;font-size:18.57px;letter-spacing:0.336px;font-weight:400;color:#555;">517,737</div>
<div class="t" style="left:2776.88px;top:975.98px;font-size:18.57px;letter-spacing:0.367px;font-weight:400;color:#333;-webkit-text-stroke:0.5px #333;">100.00%</div>
<div class="t" style="left:2783.25px;top:1004.58px;font-size:18.57px;letter-spacing:0.336px;font-weight:400;color:#333;-webkit-text-stroke:0.5px #333;">518,275</div>
<div class="t" style="left:1759.50px;top:1047.23px;font-size:19.57px;letter-spacing:0.769px;font-weight:400;color:#333;-webkit-text-stroke:0.3px #333;">Appointment</div>
<div class="t" style="left:2219.67px;top:1033.88px;font-size:18.57px;letter-spacing:0.395px;font-weight:400;color:#555;">1.39%</div>
<div class="t" style="left:2241.99px;top:1062.48px;font-size:18.57px;letter-spacing:0.465px;font-weight:400;color:#555;">181</div>
<div class="t" style="left:2497.62px;top:1033.88px;font-size:18.57px;letter-spacing:0.378px;font-weight:400;color:#555;">98.61%</div>
<div class="t" style="left:2503.99px;top:1062.48px;font-size:18.57px;letter-spacing:0.341px;font-weight:400;color:#555;">12,828</div>
<div class="t" style="left:2776.88px;top:1033.88px;font-size:18.57px;letter-spacing:0.367px;font-weight:400;color:#333;-webkit-text-stroke:0.5px #333;">100.00%</div>
<div class="t" style="left:2793.89px;top:1062.48px;font-size:18.57px;letter-spacing:0.341px;font-weight:400;color:#333;-webkit-text-stroke:0.5px #333;">13,009</div>
<div class="t" style="left:1759.50px;top:1105.13px;font-size:19.57px;letter-spacing:0.870px;font-weight:400;color:#333;-webkit-text-stroke:0.3px #333;">Payments</div>
<div class="t" style="left:2209.02px;top:1091.78px;font-size:18.57px;letter-spacing:0.378px;font-weight:400;color:#555;">38.27%</div>
<div class="t" style="left:2215.39px;top:1120.38px;font-size:18.57px;letter-spacing:0.341px;font-weight:400;color:#555;">17,878</div>
<div class="t" style="left:2497.62px;top:1091.78px;font-size:18.57px;letter-spacing:0.378px;font-weight:400;color:#555;">61.73%</div>
<div class="t" style="left:2503.99px;top:1120.38px;font-size:18.57px;letter-spacing:0.341px;font-weight:400;color:#555;">28,836</div>
<div class="t" style="left:2776.88px;top:1091.78px;font-size:18.57px;letter-spacing:0.367px;font-weight:400;color:#333;-webkit-text-stroke:0.5px #333;">100.00%</div>
<div class="t" style="left:2793.89px;top:1120.38px;font-size:18.57px;letter-spacing:0.341px;font-weight:400;color:#333;-webkit-text-stroke:0.5px #333;">46,714</div>
<div class="t" style="left:1759.50px;top:1163.03px;font-size:19.57px;letter-spacing:0.745px;font-weight:400;color:#333;-webkit-text-stroke:0.3px #333;">InfoUpdate</div>
<div class="t" style="left:2209.02px;top:1149.68px;font-size:18.57px;letter-spacing:0.378px;font-weight:400;color:#555;">19.51%</div>
<div class="t" style="left:2241.99px;top:1178.28px;font-size:18.57px;letter-spacing:0.465px;font-weight:400;color:#555;">159</div>
<div class="t" style="left:2497.62px;top:1149.68px;font-size:18.57px;letter-spacing:0.378px;font-weight:400;color:#555;">80.49%</div>
<div class="t" style="left:2530.59px;top:1178.28px;font-size:18.57px;letter-spacing:0.465px;font-weight:400;color:#555;">656</div>
<div class="t" style="left:2776.88px;top:1149.68px;font-size:18.57px;letter-spacing:0.367px;font-weight:400;color:#333;-webkit-text-stroke:0.5px #333;">100.00%</div>
<div class="t" style="left:2820.49px;top:1178.28px;font-size:18.57px;letter-spacing:0.465px;font-weight:400;color:#333;-webkit-text-stroke:0.5px #333;">815</div>
<div class="t" style="left:1759.50px;top:1220.93px;font-size:19.57px;letter-spacing:0.855px;font-weight:400;color:#333;-webkit-text-stroke:0.3px #333;">NewAccount</div>
<div class="t" style="left:2219.67px;top:1207.58px;font-size:18.57px;letter-spacing:0.395px;font-weight:400;color:#555;">3.68%</div>
<div class="t" style="left:2252.63px;top:1236.18px;font-size:18.57px;letter-spacing:0.620px;font-weight:400;color:#555;">79</div>
<div class="t" style="left:2497.62px;top:1207.58px;font-size:18.57px;letter-spacing:0.378px;font-weight:400;color:#555;">96.32%</div>
<div class="t" style="left:2514.64px;top:1236.18px;font-size:18.57px;letter-spacing:0.348px;font-weight:400;color:#555;">2,067</div>
<div class="t" style="left:2776.88px;top:1207.58px;font-size:18.57px;letter-spacing:0.367px;font-weight:400;color:#333;-webkit-text-stroke:0.5px #333;">100.00%</div>
<div class="t" style="left:2804.54px;top:1236.18px;font-size:18.57px;letter-spacing:0.348px;font-weight:400;color:#333;-webkit-text-stroke:0.5px #333;">2,146</div>
<div class="a" style="left:290px;top:1340px;width:2320px;height:200px;border-radius:60px;box-shadow:0 0 90px 20px rgba(0,0,0,0.19);background:rgba(0,0,0,0.19);"></div>
<svg style="left:0;top:1290px" width="10" height="28"><path d="M0 0C0.8 12 2.5 22 6 28H0Z" fill="#111"/></svg>
<div class="a" style="left:0;top:121px;width:1px;height:1197px;background:#f2f2f2;"></div>
</div></body></html>
